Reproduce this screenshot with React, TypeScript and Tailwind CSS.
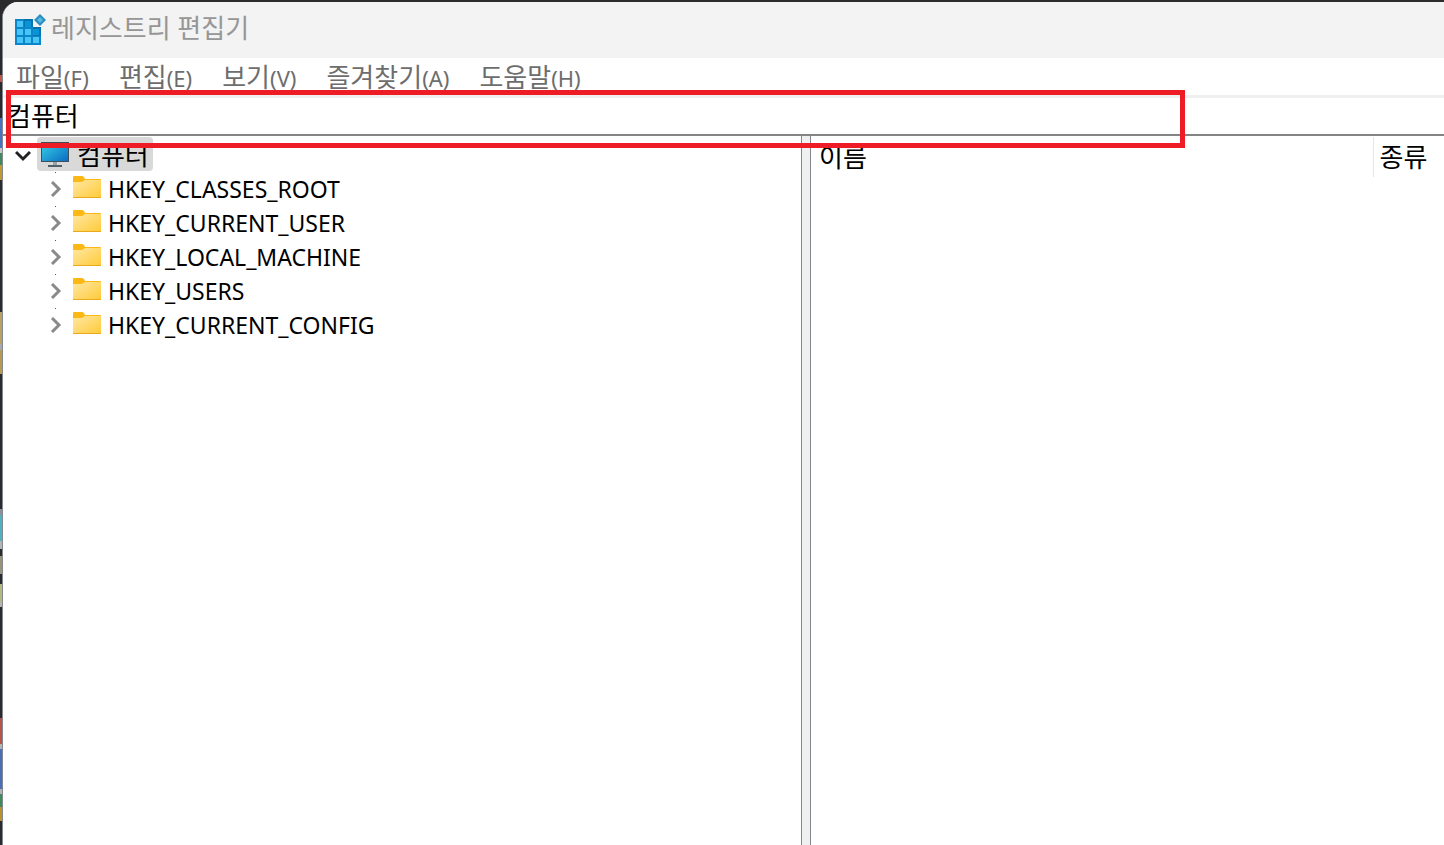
import { useState } from "react";

const menus = [
  { label: "파일", hotkey: "(F)" },
  { label: "편집", hotkey: "(E)" },
  { label: "보기", hotkey: "(V)" },
  { label: "즐겨찾기", hotkey: "(A)" },
  { label: "도움말", hotkey: "(H)" },
];

const hives = [
  "HKEY_CLASSES_ROOT",
  "HKEY_CURRENT_USER",
  "HKEY_LOCAL_MACHINE",
  "HKEY_USERS",
  "HKEY_CURRENT_CONFIG",
];

// Sliver of the desktop that shows left of the window
const desktop = [
  "h-[75px] bg-[#2b2a2c]",
  "h-[7px] bg-[#c0564a]",
  "h-[36px] bg-[#2b2a2c]",
  "h-[30px] bg-[#4a72c0]",
  "h-[5px] bg-[#c8c8c8]",
  "h-[12px] bg-[#3f8a5a]",
  "h-[15px] bg-[#c09a30]",
  "h-[132px] bg-[#2b2a2c]",
  "h-[32px] bg-[#b9a066]",
  "h-[6px] bg-[#a8a8a8]",
  "h-[24px] bg-[#b99b50]",
  "h-[135px] bg-[#2b2a2c]",
  "h-[6px] bg-[#8f8f9a]",
  "h-[26px] bg-[#4fb3bf]",
  "h-[8px] bg-[#b4b4b4]",
  "h-[7px] bg-[#2b2a2c]",
  "h-[18px] bg-[#99937a]",
  "h-[10px] bg-[#2b2a2c]",
  "h-[18px] bg-[#b3b980]",
  "h-[5px] bg-[#b4b4b4]",
  "h-[111px] bg-[#2b2a2c]",
  "h-[26px] bg-[#b8534c]",
  "h-[5px] bg-[#b4b4b4]",
  "h-[40px] bg-[#4a6fb8]",
  "h-[5px] bg-[#b4b4b4]",
  "h-[13px] bg-[#3f8a5a]",
  "h-[14px] bg-[#b9922e]",
];

function RegeditIcon() {
  return (
    <svg className="h-8 w-8 shrink-0" viewBox="0 0 32 32" aria-hidden="true">
      <path d="M1 5h18v8h8v18H1z" fill="#0a86c9" />
      <path d="M10 5h9v8h-9zM19 13h8v9h-8z" fill="#0573ad" />
      <path d="M3 7h6v6H3zM3 15h6v6H3zM11 15h6v6h-6zM3 23h6v6H3zM11 23h6v6h-6zM19 23h6v6h-6z" fill="#49c4f7" />
      <path d="M11 7h6v6h-6zM19 15h6v6h-6z" fill="#0795d7" />
      <path d="M26 0l6 6-6 6-6-6z" fill="#2b8dbd" />
      <path d="M26 3l3 3-3 3-3-3z" fill="#55b9e2" />
    </svg>
  );
}

function ComputerIcon() {
  return (
    <svg className="h-7 w-7 shrink-0" viewBox="0 0 28 28" aria-hidden="true">
      <defs>
        <linearGradient id="screen" x1="0" y1="0" x2="1" y2="1">
          <stop offset="0" stopColor="#36d0e4" />
          <stop offset="1" stopColor="#0b6bc4" />
        </linearGradient>
      </defs>
      <path d="M12 21h4v4h-4z" fill="#9aa3a9" />
      <path d="M7 24h14v2H7z" fill="#52606a" />
      <path d="M0 1h28v20H0z" fill="#3f4f5a" />
      <path d="M1 2h26v18H1z" fill="url(#screen)" />
    </svg>
  );
}

function FolderIcon() {
  return (
    <svg className="h-7 w-7 shrink-0" viewBox="0 0 28 28" aria-hidden="true">
      <defs>
        <linearGradient id="folder" x1="0" y1="0" x2="1" y2="1">
          <stop offset="0" stopColor="#ffe8a3" />
          <stop offset="1" stopColor="#ffca38" />
        </linearGradient>
      </defs>
      <path d="M0 2q0-1 1-1h8q1 0 2 1l1 2h15q1 0 1 1v4H0z" fill="#fcb916" />
      <path d="M0 7h9l3-2h16v18H0z" fill="url(#folder)" />
      <path d="M0 22h28v1H0z" fill="#eda91c" />
    </svg>
  );
}

export default function App() {
  const [path, setPath] = useState("컴퓨터");
  const [open, setOpen] = useState(true);

  return (
    <div className="flex h-screen overflow-hidden bg-[#2b2a2c] font-['Noto_Sans','Noto_Sans_CJK_KR',sans-serif] text-black">
      <div className="w-[2px] shrink-0">
        {desktop.map((color, index) => (
          <div key={index} className={color} />
        ))}
      </div>

      <div className="relative mt-[2px] flex min-w-0 flex-1 flex-col overflow-hidden rounded-tl-2xl border-l border-[#828790] bg-white">
        {/* Title bar */}
        <header className="flex h-14 shrink-0 items-center gap-[5px] bg-[#f3f3f3] pl-[11px] text-[#969696]">
          <RegeditIcon />
          <h1 className="pb-1 text-[26px] leading-8">레지스트리 편집기</h1>
        </header>

        {/* Menu */}
        <nav className="flex h-[37px] shrink-0 items-center gap-[30px] pt-px pl-[13px] text-[#6d6d6d]">
          {menus.map((menu) => (
            <button key={menu.label} className="flex items-baseline leading-8">
              <span className="text-[26px]">{menu.label}</span>
              <span className="text-[22px]">{menu.hotkey}</span>
            </button>
          ))}
        </nav>

        {/* Address bar */}
        <div className="flex h-[41px] shrink-0 border-t-[3px] border-b-2 border-t-[#f0f0f0] border-b-[#828486]">
          <input
            aria-label="주소"
            value={path}
            onChange={(e) => setPath(e.target.value)}
            className="w-full bg-white pl-1 text-[26px] leading-8 outline-none"
          />
        </div>

        <div className="flex min-h-0 flex-1">
          {/* Key tree */}
          <div className="w-[799px] shrink-0 border-r border-[#828790] pt-px">
            <button
              onClick={() => setOpen(!open)}
              aria-expanded={open}
              className="flex h-[34px] items-center pl-3"
            >
              <svg className="h-4 w-4" viewBox="0 0 16 16" fill="none" stroke="#222" strokeWidth="3" aria-hidden="true">
                <path d="M1 6l7 7 7-7" />
              </svg>
              <span className="ml-1.5 flex h-[34px] items-center gap-2 rounded-sm bg-[#d9d9d9] px-1 pt-[2px] text-[26px] leading-8">
                <ComputerIcon />
                컴퓨터
              </span>
            </button>
            {open && (
              <ul className="pt-px">
                {hives.map((hive) => (
                  <li key={hive}>
                    <button className="relative flex h-[34px] items-center pl-11 text-[23px] leading-8">
                      <span className="absolute top-0 left-[52px] h-px w-px bg-gray-600" />
                      <svg className="mr-2.5 h-4 w-4" viewBox="0 0 16 16" fill="none" stroke="#8a8a8a" strokeWidth="3" aria-hidden="true">
                        <path d="M5 1l7 7-7 7" />
                      </svg>
                      <FolderIcon />
                      <span className="ml-[7px]">{hive}</span>
                    </button>
                  </li>
                ))}
              </ul>
            )}
          </div>

          <div className="w-2 shrink-0 bg-[#f0f0f0]" />

          {/* Values */}
          <div className="min-w-0 flex-1 border-l border-[#828790] pt-px">
            <table className="w-full table-fixed text-left text-[26px] leading-8">
              <thead>
                <tr className="h-10">
                  <th className="border-r border-[#e5e5e5] pl-2 font-normal">이름</th>
                  <th className="w-[71px] pl-1.5 font-normal">종류</th>
                </tr>
              </thead>
            </table>
          </div>
        </div>

        {/* Highlight around the address bar */}
        <div className="pointer-events-none absolute top-[88px] left-[3px] h-[58px] w-[1179px] border-5 border-[#ee1c25]" />
      </div>
    </div>
  );
}
